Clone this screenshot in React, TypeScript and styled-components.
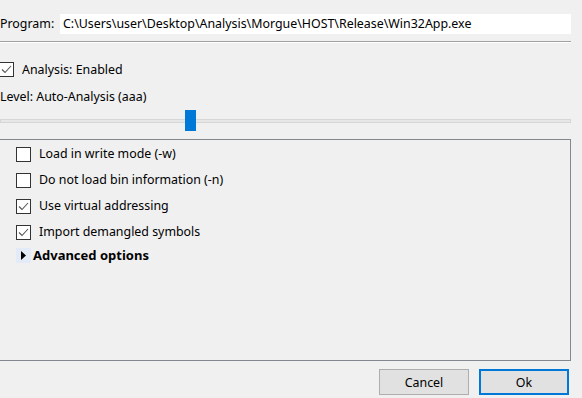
import React, { useState } from "react";
import styled, { createGlobalStyle } from "styled-components";

const Global = createGlobalStyle`
  html, body { margin: 0; padding: 0; background: #f0f0f0; }
  body { font-family: "Noto Sans", "Open Sans", sans-serif; font-size: 12.4px; color: #000; overflow: hidden; }
  * { box-sizing: border-box; }
`;

const Page = styled.div`
  width: 582px;
  height: 398px;
  padding: 14px 11px 0 0;
  display: flex;
  flex-direction: column;
`;

const ProgramRow = styled.div`
  display: flex;
  align-items: center;
  height: 20px;
`;

const Label = styled.span`
  width: 60px;
  flex: none;
  white-space: nowrap;
  line-height: 20px;
`;

const PathField = styled.div`
  flex: 1;
  height: 20px;
  background: #fff;
  padding-left: 3px;
  line-height: 20px;
  white-space: nowrap;
  overflow: hidden;
`;

const Separator = styled.div`
  margin-top: 7px;
  height: 2px;
  border-top: 1px solid #a0a0a0;
  border-bottom: 1px solid #ffffff;
`;

const CheckRow = styled.label<{ $height: number; $top?: number; $shift?: number }>`
  display: flex;
  align-items: center;
  height: ${(p) => p.$height}px;
  margin-top: ${(p) => p.$top ?? 0}px;
  margin-left: ${(p) => p.$shift ?? 0}px;
  cursor: default;
  white-space: nowrap;
`;

const Box = styled.span`
  width: 15px;
  height: 15px;
  flex: none;
  border: 1px solid #333333;
  background: #fff;
  display: flex;
  align-items: center;
  justify-content: center;
`;

const CheckText = styled.span<{ $gap: number }>`
  margin-left: ${(p) => p.$gap}px;
  line-height: 16px;
`;

const LevelText = styled.div`
  margin-top: 12px;
  height: 16px;
  line-height: 16px;
  white-space: nowrap;
`;

const Slider = styled.div`
  margin-top: 5px;
  height: 21px;
  position: relative;
  display: flex;
  align-items: center;
`;

const Track = styled.div`
  flex: 1;
  height: 4px;
  background: #e7e7e7;
  border: 1px solid #d6d6d6;
`;

const Thumb = styled.div`
  position: absolute;
  top: 0;
  width: 11px;
  height: 21px;
  background: #0078d7;
`;

const GroupBox = styled.div`
  margin-top: 8px;
  margin-left: -2px;
  height: 222px;
  border: 1px solid #828790;
  padding: 1px 0 0 17px;
  display: flex;
  flex-direction: column;
`;

const Disclosure = styled.div`
  display: flex;
  align-items: center;
  height: 20px;
`;

const ArrowCell = styled.span`
  width: 15px;
  height: 15px;
  background: #e3ecf6;
  display: flex;
  align-items: center;
  justify-content: center;
`;

const DisclosureText = styled.span`
  margin-left: 2px;
  font-size: 13px;
  font-weight: 700;
  line-height: 16px;
  white-space: nowrap;
`;

const ButtonRow = styled.div`
  margin-top: 8px;
  display: flex;
  justify-content: flex-end;
  gap: 10px;
  padding-right: 2px;
`;

const Button = styled.button<{ $default?: boolean }>`
  width: 90px;
  height: 26px;
  font-family: inherit;
  font-size: 12.4px;
  color: #000;
  background: #e1e1e1;
  border: ${(p) => (p.$default ? "2px solid #0078d7" : "1px solid #adadad")};
  padding: 0;
`;

const Check = () => (
  <svg width="11" height="9" viewBox="0 0 11 9">
    <polyline points="1,4.5 4,7.5 10,1" fill="none" stroke="#555" strokeWidth="1.1" />
  </svg>
);

const Triangle = () => (
  <svg width="5" height="9" viewBox="0 0 5 9">
    <polygon points="0,0 5,4.5 0,9" fill="#000" />
  </svg>
);

type Opt = { label: string; checked: boolean };

export default function App() {
  const [analysis, setAnalysis] = useState(true);
  const [opts, setOpts] = useState<Opt[]>([
    { label: "Load in write mode (-w)", checked: false },
    { label: "Do not load bin information (-n)", checked: false },
    { label: "Use virtual addressing", checked: true },
    { label: "Import demangled symbols", checked: true },
  ]);
  const level = 185;

  return (
    <>
      <Global />
      <Page>
        <ProgramRow>
          <Label>Program:</Label>
          <PathField>C:\Users\user\Desktop\Analysis\Morgue\HOST\Release\Win32App.exe</PathField>
        </ProgramRow>
        <Separator />
        <CheckRow $height={15} $top={19} $shift={-1} onClick={() => setAnalysis(!analysis)}>
          <Box>{analysis && <Check />}</Box>
          <CheckText $gap={8}>Analysis: Enabled</CheckText>
        </CheckRow>
        <LevelText>Level: Auto-Analysis (aaa)</LevelText>
        <Slider>
          <Track />
          <Thumb style={{ left: level }} />
        </Slider>
        <GroupBox>
          {opts.map((o, i) => (
            <CheckRow
              key={o.label}
              $height={26}
              onClick={() =>
                setOpts(opts.map((x, j) => (j === i ? { ...x, checked: !x.checked } : x)))
              }
            >
              <Box>{o.checked && <Check />}</Box>
              <CheckText $gap={8}>{o.label}</CheckText>
            </CheckRow>
          ))}
          <Disclosure>
            <ArrowCell>
              <Triangle />
            </ArrowCell>
            <DisclosureText>Advanced options</DisclosureText>
          </Disclosure>
        </GroupBox>
        <ButtonRow>
          <Button>Cancel</Button>
          <Button $default>Ok</Button>
        </ButtonRow>
      </Page>
    </>
  );
}
